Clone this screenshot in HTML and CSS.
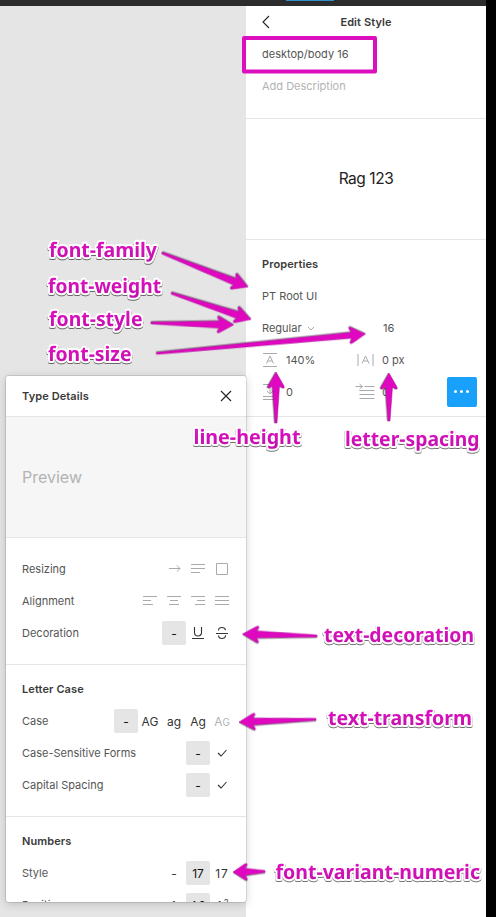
FILE: index.html
```html
<!DOCTYPE html>
<html lang="en">
<head>
<meta charset="utf-8">
<title>Edit Style</title>
<link rel="stylesheet" href="styles.css">
</head>
<body>
<div class="app">
  <header class="topbar"><span class="topbar-tab"></span></header>
  <main class="workspace">
    <div class="canvas"></div>
    <aside class="panel">
      <section class="meta">
        <div class="panel-head">
          <svg class="back" width="9" height="14" viewBox="0 0 9 14"><path d="M7 1 1 7l6 6"/></svg>
          <h1>Edit Style</h1>
        </div>
        <div class="line">desktop/body 16</div>
        <div class="line muted">Add Description</div>
      </section>
      <section class="sample">Rag 123</section>
      <section class="props">
        <h2 class="line">Properties</h2>
        <div class="line">PT Root UI</div>
        <div class="line pair"><span>Regular <svg class="chev" width="8" height="5" viewBox="0 0 8 5"><path d="M1 1l3 3 3-3"/></svg></span><span class="size">16</span></div>
        <div class="line pair">
          <span class="metric"><svg class="glyph" width="16" height="16" viewBox="0 0 16 16"><path d="M1 1.500h14M1 14.500h14M4.500 11.500 8 4l3.500 7.500M5.800 9h4.400"/></svg>140%</span>
          <span class="metric wide"><svg class="glyph" width="18" height="16" viewBox="0 0 18 16"><path d="M1.500 2v12M16.500 2v12M5.500 11.500 9 4l3.500 7.500M6.800 9h4.400"/></svg>0 px</span>
        </div>
        <div class="line pair">
          <span class="metric"><svg class="glyph" width="16" height="18" viewBox="0 0 16 18"><path d="M1 1.500h14M1 13.500h14M1 16.500h14M8 1.500v9M5 8l3 3 3-3"/></svg>0</span>
          <span class="metric wide"><svg class="glyph" width="20" height="18" viewBox="0 0 20 18"><path d="M0 3.500h7M4 1l3 2.500L4 6M9 3.500h10M4 7.500h15M4 11.500h15M4 15.500h15"/></svg>0</span>
          <button class="more" aria-label="More"><i></i><i></i><i></i></button>
        </div>
      </section>
    </aside>
    <div class="edge"></div>
  </main>

  <div class="dialog">
    <div class="dialog-head"><h2>Type Details</h2><svg class="close" width="12" height="12" viewBox="0 0 12 12"><path d="M1 1l10 10M11 1 1 11"/></svg></div>
    <div class="preview">Preview</div>
    <section class="group">
      <div class="row"><span>Resizing</span><div class="opts">
        <b><svg class="ico" viewBox="0 0 24 24"><path d="M7 11.500h11M15 8.500l3 3-3 3"/></svg></b>
        <b><svg class="ico" viewBox="0 0 24 24"><path d="M5 7.500h14M5 11.500h14M5 15.500h9"/></svg></b>
        <b><svg class="ico" viewBox="0 0 24 24"><path d="M6.500 6.500h11v11h-11z"/></svg></b></div></div>
      <div class="row"><span>Alignment</span><div class="opts">
        <b><svg class="ico" viewBox="0 0 24 24"><path d="M5 7.500h14M5 11.500h8M5 15.500h10"/></svg></b>
        <b><svg class="ico" viewBox="0 0 24 24"><path d="M5 7.500h14M8 11.500h8M7 15.500h10"/></svg></b>
        <b><svg class="ico" viewBox="0 0 24 24"><path d="M5 7.500h14M11 11.500h8M9 15.500h10"/></svg></b>
        <b><svg class="ico" viewBox="0 0 24 24"><path d="M5 7.500h14M5 11.500h14M5 15.500h14"/></svg></b></div></div>
      <div class="row"><span>Decoration</span><div class="opts">
        <b class="on">-</b>
        <b><svg class="ico dark" viewBox="0 0 24 24"><path d="M8.500 6v5.500a3.500 3.500 0 0 0 7 0V6M6 17.500h12"/></svg></b>
        <b><svg class="ico dark" viewBox="0 0 24 24"><path d="M6 12.500h12M15.500 9.200C15.200 7.500 14 6.500 12 6.500S8.500 7.600 8.500 9.400M15.500 14.300c0 2-1.500 3.200-3.500 3.200s-3.400-1.100-3.500-3"/></svg></b></div></div>
    </section>
    <section class="group">
      <h2 class="row">Letter Case</h2>
      <div class="row"><span>Case</span><div class="opts"><b class="on">-</b><b>AG</b><b>ag</b><b>Ag</b><b class="off">A<small>G</small></b></div></div>
      <div class="row"><span>Case-Sensitive Forms</span><div class="opts"><b class="on">-</b><b><svg class="ico dark" viewBox="0 0 24 24"><path d="M8 12l3 3 5.500-6"/></svg></b></div></div>
      <div class="row"><span>Capital Spacing</span><div class="opts"><b class="on">-</b><b><svg class="ico dark" viewBox="0 0 24 24"><path d="M8 12l3 3 5.500-6"/></svg></b></div></div>
    </section>
    <section class="group">
      <h2 class="row">Numbers</h2>
      <div class="row"><span>Style</span><div class="opts"><b>-</b><b class="on">17</b><b class="spaced">17</b></div></div>
      <div class="row"><span>Position</span><div class="opts"><b>A</b><b class="on">A2</b><b>A<sup>2</sup></b></div></div>
    </section>
  </div>

  <svg class="notes" width="496" height="917" viewBox="0 0 496 917">
    <defs>
      <linearGradient id="ink" x1="0" y1="0" x2="0" y2="1"><stop offset="0" stop-color="#e812c8"/><stop offset="1" stop-color="#bd10a9"/></linearGradient>
    </defs>
    <rect class="frame" x="244" y="38" width="131" height="33.500"/>
    <g class="arrows">
      <path transform="translate(248 287) rotate(201.600)" d="M0 0 14-8Q17-9 16-6.500L14-3.500 92.500-1V1L14 3.500 16 6.500Q17 9 14 8Z"/>
      <path transform="translate(251 319.500) rotate(198.300)" d="M0 0 14-8Q17-9 16-6.500L14-3.500 84-1V1L14 3.500 16 6.500Q17 9 14 8Z"/>
      <path transform="translate(233.500 325) rotate(181.400)" d="M0 0 14-8Q17-9 16-6.500L14-3.500 82.500-1V1L14 3.500 16 6.500Q17 9 14 8Z"/>
      <path transform="translate(365.500 334) rotate(174.700)" d="M0 0 14-8Q17-9 16-6.500L14-3 210-1V1L14 3 16 6.500Q17 9 14 8Z"/>
      <path transform="translate(276 372) rotate(90)" d="M0 0 14-8Q17-9 16-6.500L14-3.500 51-1V1L14 3.500 16 6.500Q17 9 14 8Z"/>
      <path transform="translate(389 373) rotate(90)" d="M0 0 14-8Q17-9 16-6.500L14-3.500 48-1V1L14 3.500 16 6.500Q17 9 14 8Z"/>
      <path transform="translate(242.500 634) rotate(1.500)" d="M0 0 14-8Q17-9 16-6.500L14-3.500 74.500-1V1L14 3.500 16 6.500Q17 9 14 8Z"/>
      <path transform="translate(239 722) rotate(-2)" d="M0 0 14-8Q17-9 16-6.500L14-3.500 77-1V1L14 3.500 16 6.500Q17 9 14 8Z"/>
      <path transform="translate(233 872) rotate(-1)" d="M0 0 12-8Q15-9 14-6.500L12-3.500 32-1V1L12 3.500 14 6.500Q15 9 12 8Z"/>
    </g>
    <g class="labels">
      <text x="49" y="257" textLength="108" lengthAdjust="spacingAndGlyphs">font-family</text>
      <text x="48" y="293" textLength="113" lengthAdjust="spacingAndGlyphs">font-weight</text>
      <text x="49" y="326" textLength="93.500" lengthAdjust="spacingAndGlyphs">font-style</text>
      <text x="48" y="361" textLength="83.500" lengthAdjust="spacingAndGlyphs">font-size</text>
      <text x="193.500" y="444" textLength="107" lengthAdjust="spacingAndGlyphs">line-height</text>
      <text x="345" y="446" textLength="134.500" lengthAdjust="spacingAndGlyphs">letter-spacing</text>
      <text x="324" y="642" textLength="150" lengthAdjust="spacingAndGlyphs">text-decoration</text>
      <text x="328" y="725" textLength="144" lengthAdjust="spacingAndGlyphs">text-transform</text>
      <text x="275.500" y="879" textLength="204.500" lengthAdjust="spacingAndGlyphs">font-variant-numeric</text>
    </g>
  </svg>
</div>
</body>
</html>
```
FILE: styles.css
```css
* { box-sizing: border-box; }
body {
  margin: 0;
  font-family: Inter, "Liberation Sans", sans-serif;
  font-size: 11px;
  letter-spacing: 0;
  color: #555;
}
h1, h2 { margin: 0; font-size: 11px; font-weight: 600; color: #3a3a3a; letter-spacing: .1px; }
svg { fill: none; }
.app {
  position: relative;
  display: flex;
  flex-direction: column;
  width: 496px;
  height: 917px;
  overflow: hidden;
  background: #000;
}
.topbar { height: 6px; width: 486px; background: #2c2c2c; }
.topbar-tab { display: block; width: 48px; height: 1px; margin-left: 286px; background: #2f8fc9; }
.workspace { flex: 1; display: flex; }
.canvas { width: 246px; background: #e5e5e5; }
.panel { width: 240px; background: #fff; }
.edge { width: 10px; background: #000; }

.line { display: flex; align-items: center; height: 32px; }
.muted { color: #b3b3b3; }
.meta { height: 113px; padding: 0 16px; border-bottom: 1px solid #e5e5e5; }
.panel-head { display: grid; grid-template-columns: 9px 1fr 9px; align-items: center; height: 32px; text-align: center; }
.back path { stroke: #222; stroke-width: 1.1; }
.sample {
  display: flex; align-items: center; justify-content: center;
  height: 121px; padding-bottom: 2px; border-bottom: 1px solid #e5e5e5;
  font-size: 15.5px; letter-spacing: -.45px; color: #222;
}
.props { height: 177px; padding: 8px 9px 0 16px; border-bottom: 1px solid #e5e5e5; }
.pair > span:first-child { width: 93px; }
.size { margin-left: 28px; }
.chev { margin-left: 2px; vertical-align: 1px; }
.chev path { stroke: #aaa; }
.metric { display: flex; align-items: center; gap: 8px; }
.metric.wide { gap: 6px; }
.metric.wide .glyph { width: 21px; }
.glyph path { stroke: #aaa; }
.more {
  display: flex; align-items: center; justify-content: center; gap: 3px;
  width: 30px; height: 30px; margin-left: auto; padding: 0 2px 1px 0;
  border: 0; border-radius: 2px; background: #18a0fb;
}
.more i { width: 3px; height: 3px; border-radius: 50%; background: #fff; }

.dialog {
  position: absolute; left: 6px; top: 376px;
  width: 240px; height: 526px; overflow: hidden;
  background: #fff; border-radius: 2px;
  box-shadow: 0 0 0 .5px rgba(0,0,0,.2), 0 2px 10px rgba(0,0,0,.18);
}
.dialog-head { display: flex; align-items: center; justify-content: space-between; height: 41px; padding: 0 14px 0 16px; border-bottom: 1px solid #e5e5e5; }
.close path { stroke: #222; stroke-width: 1.1; }
.preview { display: flex; align-items: center; height: 121px; padding-left: 16px; border-bottom: 1px solid #e5e5e5; background: #f6f6f6; font-size: 16px; color: #b3b3b3; }
.group { padding: 8px 12px 15px 16px; border-bottom: 1px solid #e5e5e5; }
.group:nth-of-type(1) { padding-top: 15px; }
.row { display: flex; align-items: center; justify-content: space-between; height: 32px; }
.opts { display: flex; }
.opts b { display: flex; align-items: center; justify-content: center; width: 24px; height: 24px; border-radius: 2px; font-weight: 400; font-size: 12px; letter-spacing: 0; color: #333; }
.opts .on { background: #e5e5e5; color: #111; }
.opts .off { color: #b3b3b3; }
.opts .spaced { letter-spacing: .8px; }
.opts small { font-size: 10px; padding-top: 1px; }
.opts sup { font-size: 8px; line-height: 8px; align-self: flex-start; margin-top: 5px; }
.ico { width: 24px; height: 24px; }
.ico path { stroke: #aaa; }
.ico.dark path { stroke: #333; stroke-width: 1.1; }

.notes { position: absolute; left: 0; top: 0; pointer-events: none; }
.frame { stroke: #dc0fbe; stroke-width: 4; stroke-linejoin: round; }
.arrows path { fill: #df08c0; stroke: #a80c94; stroke-width: .5; filter: drop-shadow(0 1px .6px rgba(0,0,0,.35)); }
.labels text {
  font: 700 20px "Noto Sans", "Open Sans", sans-serif;
  letter-spacing: 0;
  fill: url(#ink);
  stroke: #fff; stroke-width: 4px; stroke-linejoin: round; paint-order: stroke;
  filter: drop-shadow(0 1px .6px rgba(0,0,0,.55));
  text-rendering: geometricPrecision;
}
```
